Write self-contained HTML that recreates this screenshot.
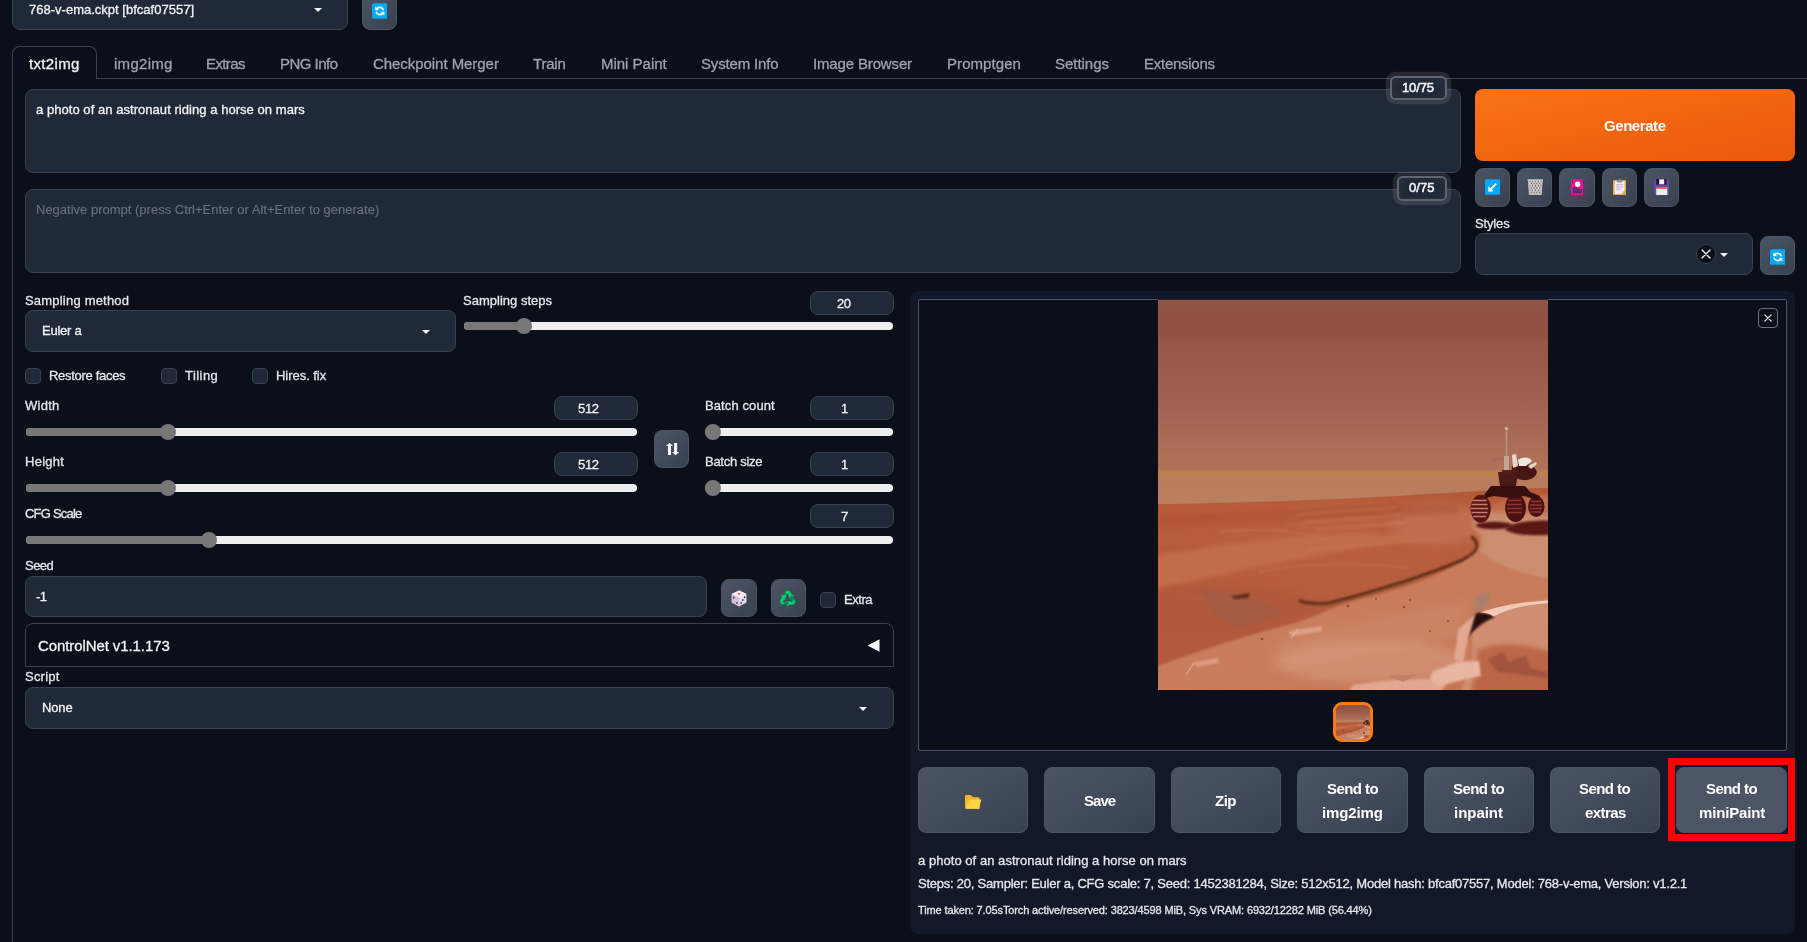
<!DOCTYPE html>
<html><head><meta charset="utf-8"><title>Stable Diffusion</title>
<style>
*{box-sizing:border-box;margin:0;padding:0}
html,body{width:1807px;height:942px;overflow:hidden;background:#0b0f19}
body{font-family:"Liberation Sans",sans-serif;color:#f3f4f6}
#root{position:relative;width:1807px;height:942px;overflow:hidden;background:#0b0f19}
#root>*{position:absolute}
.t{white-space:nowrap;line-height:1;display:block;will-change:transform;-webkit-text-stroke:0.3px currentColor}
.in{background:#1f2937;border:1px solid #374151;border-radius:8px}
.num{background:#1f2937;border:1px solid #374151;border-radius:8px}
.btn{background:linear-gradient(to bottom right,#4b5563,#374151);border:1px solid #4b5563;border-radius:8px}
.cb{background:#1f2937;border:1px solid #374151;border-radius:4px;width:16px;height:16px}
.trk{height:8px;border-radius:4px;background:#efefef;overflow:hidden}
.trk i{display:block;height:8px;background:#777}
.knob{width:16px;height:16px;border-radius:50%;background:#777}
.arr{width:0;height:0;border-left:4px solid transparent;border-right:4px solid transparent;border-top:4.5px solid #f3f4f6}
.ln{background:#374151}
</style>
<style>
.tok{background:#1f2937;border:2px solid rgba(192,192,192,0.4);border-radius:5.6px;box-shadow:0 0 0 4.2px rgba(192,192,192,0.15), inset 0 0 8px rgba(192,192,192,0.075)}
</style>

</head><body>
<div id="root">
<!-- top checkpoint dropdown -->
<div class="in" style="left:12px;top:-12px;width:336px;height:42px"></div>
<div class="arr" style="left:314px;top:8px"></div>
<div class="btn" style="left:362px;top:-12px;width:35px;height:42px"></div>
<!-- tabs -->
<div class="ln" style="left:12px;top:78px;width:1795px;height:1px"></div>
<div style="left:12px;top:46px;width:85px;height:33px;border:1px solid #374151;border-bottom:none;border-radius:8px 8px 0 0;background:#0b0f19"></div>
<div class="ln" style="left:12px;top:78px;width:1px;height:870px"></div>
<!-- prompts -->
<div class="in" style="left:25px;top:89px;width:1436px;height:84px"></div>
<div class="in" style="left:25px;top:189px;width:1436px;height:84px"></div>
<!-- token counters -->
<div class="tok" style="left:1389.5px;top:75.5px;width:57px;height:24.5px"></div>
<div class="tok" style="left:1396.5px;top:176px;width:50px;height:24.5px"></div>
<!-- generate -->
<div style="left:1475px;top:89px;width:320px;height:72px;border-radius:8px;background:linear-gradient(to bottom right,#f97316,#ea580c)"></div>
<!-- tool buttons -->
<div class="btn" style="left:1475px;top:168px;width:35px;height:39px"></div>
<div class="btn" style="left:1517px;top:168px;width:35px;height:39px"></div>
<div class="btn" style="left:1559px;top:168px;width:36px;height:39px"></div>
<div class="btn" style="left:1602px;top:168px;width:35px;height:39px"></div>
<div class="btn" style="left:1644px;top:168px;width:35px;height:39px"></div>
<!-- styles -->
<div class="in" style="left:1475px;top:233px;width:278px;height:42px"></div>
<div style="left:1696px;top:244px;width:20px;height:20px;border-radius:50%;background:#0b0f19;border:1px solid #374151"></div>
<svg style="left:1701px;top:249px" width="10" height="10" viewBox="0 0 10 10"><path d="M1 1L9 9M9 1L1 9" stroke="#f3f4f6" stroke-width="1.4" stroke-linecap="round"/></svg>
<div class="arr" style="left:1720px;top:252.5px"></div>
<div class="btn" style="left:1760px;top:236px;width:35px;height:39px"></div>
<!-- sampling -->
<div class="in" style="left:25px;top:310px;width:431px;height:42px"></div>
<div class="arr" style="left:422px;top:329.5px"></div>
<div class="num" style="left:810px;top:291px;width:84px;height:24px"></div>
<div class="trk" style="left:464px;top:322px;width:429px"><i style="width:60px"></i></div>
<div class="knob" style="left:516px;top:318px"></div>
<!-- checkboxes -->
<div class="cb" style="left:25px;top:368px"></div>
<div class="cb" style="left:161px;top:368px"></div>
<div class="cb" style="left:252px;top:368px"></div>
<!-- width/height -->
<div class="num" style="left:554px;top:396px;width:84px;height:24px"></div>
<div class="trk" style="left:25.5px;top:428px;width:611.5px"><i style="width:142px"></i></div>
<div class="knob" style="left:160px;top:424px"></div>
<div class="num" style="left:554px;top:452px;width:84px;height:24px"></div>
<div class="trk" style="left:25.5px;top:484px;width:611.5px"><i style="width:142px"></i></div>
<div class="knob" style="left:160px;top:480px"></div>
<div class="btn" style="left:654px;top:430px;width:35px;height:38px"></div>
<!-- batch -->
<div class="num" style="left:810px;top:396px;width:84px;height:24px"></div>
<div class="trk" style="left:705px;top:428px;width:188px"><i style="width:8px"></i></div>
<div class="knob" style="left:705px;top:424px"></div>
<div class="num" style="left:810px;top:452px;width:84px;height:24px"></div>
<div class="trk" style="left:705px;top:484px;width:188px"><i style="width:8px"></i></div>
<div class="knob" style="left:705px;top:480px"></div>
<!-- cfg -->
<div class="num" style="left:810px;top:504px;width:84px;height:24px"></div>
<div class="trk" style="left:25.5px;top:536px;width:867.5px"><i style="width:183px"></i></div>
<div class="knob" style="left:200.7px;top:532px"></div>
<!-- seed -->
<div class="in" style="left:25px;top:576px;width:682px;height:41px"></div>
<div class="btn" style="left:721px;top:579px;width:36px;height:38px"></div>
<div class="btn" style="left:771px;top:579px;width:35px;height:38px"></div>
<div class="cb" style="left:820px;top:592px"></div>
<!-- controlnet -->
<div style="left:25px;top:623px;width:869px;height:44px;border:1px solid #374151;border-radius:8px 8px 0 0;background:#0b0f19"></div>
<svg style="left:867px;top:638.5px" width="13" height="13" viewBox="0 0 13 13"><path d="M12.5 0.3V12.7L0.5 6.5Z" fill="#f3f4f6"/></svg>
<!-- script -->
<div class="in" style="left:25px;top:687px;width:869px;height:42px"></div>
<div class="arr" style="left:859px;top:706.5px"></div>
<!-- results panel -->
<div style="left:910px;top:291px;width:885px;height:642.5px;border-radius:8px;background:#111827"></div>
<div style="left:918px;top:299px;width:869px;height:452px;background:#0b0f19;border:1px solid #4b5563;border-radius:2px"></div>
<div id="gtop" style="left:1158px;top:299px;width:390px;height:1px;background:#1e293b"></div>
<!-- close btn -->
<div style="left:1758px;top:308px;width:20px;height:20px;border-radius:4px;border:1px solid #6b7280;background:#0b0f19"></div>
<svg style="left:1763px;top:313px" width="10" height="10" viewBox="0 0 10 10"><path d="M1.800 1.800L8.200 8.200M8.200 1.800L1.800 8.200" stroke="#e5e7eb" stroke-width="1.200" stroke-linecap="round"/></svg>
<!-- thumbnail -->
<div id="thumb" style="left:1333px;top:702px;width:40px;height:40px;border-radius:9px;border:3px solid #f97b16;overflow:hidden;background:#b3583a"><svg width="34" height="34" viewBox="0 0 390 390" style="display:block"><use href="#marsg"/></svg></div>
<!-- bottom buttons -->
<div class="btn" style="left:918px;top:767px;width:110.4px;height:66px"></div>
<div class="btn" style="left:1044.4px;top:767px;width:110.4px;height:66px"></div>
<div class="btn" style="left:1170.8px;top:767px;width:110.4px;height:66px"></div>
<div class="btn" style="left:1297.2px;top:767px;width:110.4px;height:66px"></div>
<div class="btn" style="left:1423.6px;top:767px;width:110.4px;height:66px"></div>
<div class="btn" style="left:1550px;top:767px;width:110.4px;height:66px"></div>
<div class="btn" style="left:1676.4px;top:767px;width:110.4px;height:66px;background:#4b5563"></div>
<!-- red annotation -->
<div style="left:1668px;top:758px;width:127px;height:83px;border:7px solid #ff0000"></div>

<svg id="mars" style="left:1158px;top:300px" width="390" height="390" viewBox="0 0 390 390">
<defs>
<linearGradient id="sky" x1="0" y1="0" x2="0" y2="1">
<stop offset="0" stop-color="#8f5748"/><stop offset="0.04" stop-color="#8f5243"/><stop offset="0.17" stop-color="#925141"/>
<stop offset="0.2" stop-color="#965645"/><stop offset="0.4" stop-color="#9c5d4b"/><stop offset="0.6" stop-color="#a66854"/>
<stop offset="0.8" stop-color="#af7259"/><stop offset="0.815" stop-color="#b0745a"/>
<stop offset="0.825" stop-color="#bd7f48"/><stop offset="0.84" stop-color="#bd8050"/><stop offset="0.85" stop-color="#b97c5c"/>
<stop offset="1" stop-color="#b98060"/>
</linearGradient>
<linearGradient id="gnd" x1="0" y1="0" x2="0" y2="1">
<stop offset="0" stop-color="#b45838"/><stop offset="0.15" stop-color="#b95e3d"/><stop offset="0.45" stop-color="#b85d3e"/>
<stop offset="0.7" stop-color="#b96040"/><stop offset="1" stop-color="#bc6546"/>
</linearGradient>
<linearGradient id="fg" x1="0" y1="0" x2="1" y2="1">
<stop offset="0" stop-color="#c87c5b"/><stop offset="0.5" stop-color="#c97d5c"/><stop offset="1" stop-color="#c47556"/>
</linearGradient>
<filter id="b1" x="-10%" y="-10%" width="120%" height="120%"><feGaussianBlur stdDeviation="1"/></filter>
<filter id="b2" x="-20%" y="-40%" width="140%" height="180%"><feGaussianBlur stdDeviation="2.5"/></filter>
<filter id="b4" x="-60%" y="-100%" width="220%" height="300%"><feGaussianBlur stdDeviation="5"/></filter>
<filter id="nz" x="0" y="0" width="100%" height="100%"><feTurbulence type="fractalNoise" baseFrequency="0.9" numOctaves="2" seed="3"/><feColorMatrix values="0 0 0 0 0.35  0 0 0 0 0.12  0 0 0 0 0.08  0 0 0 -1.4 0.62"/></filter>
<clipPath id="cl"><rect width="390" height="390"/></clipPath>
</defs>
<g clip-path="url(#cl)" id="marsg">
<rect width="390" height="208" fill="url(#sky)"/>
<!-- ground base -->
<path d="M0 204 C80 203 170 200 240 196 C300 192 350 189 390 188 V390 H0Z" fill="url(#gnd)"/>
<!-- light band on dune -->
<path d="M-15 258 C60 244 130 236 200 232 L270 238 C180 250 80 270 -15 293Z" fill="#c6724f" opacity=".75" filter="url(#b2)"/>
<ellipse cx="278" cy="224" rx="46" ry="22" fill="#c97c60" opacity=".55" filter="url(#b4)"/>
<ellipse cx="185" cy="218" rx="60" ry="14" fill="#c47050" opacity=".4" filter="url(#b4)"/>
<path d="M-15 215 C100 212 200 206 300 204 L300 214 C200 218 100 224 -15 228Z" fill="#a94d30" opacity=".45" filter="url(#b2)"/>
<!-- ripples -->
<g stroke="#a9533c" stroke-width="1.2" fill="none" opacity=".5" filter="url(#b1)">
<path d="M135 212 C170 206 200 208 235 204"/><path d="M140 219 C175 214 205 216 240 210"/><path d="M150 226 C185 222 210 224 245 218"/><path d="M165 233 C195 230 220 231 250 226"/>
<path d="M5 222 C30 218 50 217 80 214"/><path d="M0 250 C20 247 35 247 50 245"/>
</g>
<g stroke="#cc7c5a" stroke-width="1.6" fill="none" opacity=".55" filter="url(#b1)"><path d="M138 215.500 C172 210 203 212 238 207"/><path d="M145 222.500 C180 218 208 220 242 214"/><path d="M157 229.500 C190 226 215 227 248 222"/><path d="M60 232 C100 228 130 228 170 240"/><path d="M150 250 C190 244 240 246 290 236"/><path d="M100 272 C150 262 200 262 250 268"/><path d="M20 300 C50 296 70 300 100 318"/></g>
<!-- right plateau (lighter, where rover stands) -->
<path d="M322 236 C300 215 330 200 405 196 V300 C360 300 330 305 300 312 L250 300 C290 280 325 262 322 236Z" fill="#cb8e70" filter="url(#b2)"/>
<path d="M330 205 C350 200 375 198 405 197 V215 C370 214 350 212 330 212Z" fill="#bb5f40" opacity=".7" filter="url(#b2)"/>
<!-- dark lower-left dune -->
<path d="M-15 290 C50 280 110 282 150 296 L200 300 C170 312 120 330 80 345 C50 356 20 366 -15 378Z" fill="#b2583b" opacity=".8" filter="url(#b2)"/>
<path d="M40 289 L91 295 L129 313 L81 329 L56 313Z" fill="#9c5c4a" opacity=".6" filter="url(#b1)"/>
<path d="M74 296 L92 293 L90 298 L76 299Z" fill="#5a2818" opacity=".9" filter="url(#b1)"/>
<!-- foreground light -->
<path d="M-10 370 C40 350 90 335 141 322 C160 314 180 306 200 300 C240 290 290 275 320 250 C335 262 360 275 400 280 V400 H-10Z" fill="url(#fg)" filter="url(#b1)"/>
<path d="M120 340 C180 325 250 310 310 300 L300 340 C240 350 180 360 110 372Z" fill="#d08a6a" opacity=".6" filter="url(#b4)"/>
<ellipse cx="215" cy="362" rx="95" ry="22" fill="#dc9c84" opacity=".55" filter="url(#b4)"/>
<!-- track curve -->
<path d="M142 301 C150 304 160 304 171 303 C215 292 270 275 304 260 C318 253 324 246 314 237" fill="none" stroke="#4a2014" stroke-width="2.600" stroke-linecap="round" opacity=".9" filter="url(#b1)"/>
<path d="M142 302 C150 305 160 306 171 305 C200 298 230 289 255 281" fill="none" stroke="#6b5a2a" stroke-width="1.5" opacity=".5"/>
<!-- right rock mass -->
<path d="M312 330 C330 312 360 302 400 298 V400 H298 C312 372 318 352 312 330Z" fill="#d08e72" filter="url(#b1)"/>
<path d="M320 350 C345 340 370 345 405 355 V405 H312Z" fill="#b86040" opacity=".85" filter="url(#b2)"/>
<path d="M330 360 L345 352 L350 362 L368 356 L372 368 L390 372 V378 L360 374 L340 372Z" fill="#8a4434" opacity=".55" filter="url(#b1)"/>
<!-- crack shadow -->
<path d="M318 313 C326 312 332 314 337 317 C325 322 314 330 309 340 C306 332 310 320 318 313Z" fill="#250c0a" filter="url(#b1)"/>
<!-- bright ridge -->
<path d="M322 312.500 C340 306.500 360 301.500 400 300 V302.600 C365 304 348 309.500 336 316.500 C332 314 327 312.500 322 312.500Z" fill="#f4cbb9"/>
<path d="M316 296 L332 293 L330 306 L318 312Z" fill="#a88070" opacity=".9" filter="url(#b1)"/>
<!-- slab edge -->
<path d="M300 330 L312 318 L318 312 L310 340 L305 362 L296 360 L299 340Z" fill="#e3a892" filter="url(#b1)"/>
<path d="M274 372 L300 362 L321 361 L323 376 L305 380 L280 386 L272 380Z" fill="#e8b8a2" filter="url(#b1)"/>
<path d="M195 385 C230 380 260 378 290 380 L280 400 H185Z" fill="#e9b39e" opacity=".8" filter="url(#b1)"/>
<path d="M230 376 L260 374 L245 382Z" fill="#c07a64" opacity=".7"/>
<!-- small debris -->
<g fill="#6b3426" opacity=".7"><circle cx="246" cy="307" r="1.2"/><circle cx="252" cy="300" r="1"/><circle cx="190" cy="306" r="1.3"/><circle cx="218" cy="299" r="1"/><circle cx="104" cy="339" r="1.2"/><circle cx="272" cy="331" r="1"/><circle cx="290" cy="321" r="1"/></g>
<path d="M130 331 L163 326 L164 331 L134 336Z" fill="#e3a996" opacity=".8" filter="url(#b1)"/>
<path d="M36 362 L60 358 L61 363 L38 367Z" fill="#e3a996" opacity=".7" filter="url(#b1)"/>
<path d="M28 375 L36 363" stroke="#e8b8a6" stroke-width="1.2" opacity=".8"/><path d="M133 338 L140 329" stroke="#e8b8a6" stroke-width="1.2" opacity=".8"/>
<!-- noise texture on ground -->
<path d="M0 204 C80 203 170 200 240 196 C300 192 350 189 390 188 V390 H0Z" fill="#000" filter="url(#nz)" opacity=".35"/>
<!-- rover shadows -->
<ellipse cx="336" cy="225.500" rx="18" ry="3.800" fill="#5c1614" filter="url(#b1)"/>
<path d="M347 229 C355 221 375 220 400 220.500 V234.500 C375 236 355 236 347 229Z" fill="#5c1614" filter="url(#b1)"/>
<!-- rover -->
<g>
<ellipse cx="378.300" cy="206.500" rx="8.200" ry="10.600" fill="#4c1212"/>
<ellipse cx="322.7" cy="208.8" rx="10.1" ry="14.1" fill="#581616"/>
<ellipse cx="357.6" cy="208" rx="10.4" ry="14" fill="#4a1111"/>
<g stroke="#d8857a" stroke-width="1.400" opacity=".9"><path d="M314.5 200.500h14M313.500 204.500h16M313 208.500h17M313.500 212.500h16M315 216.500h13"/></g>
<g stroke="#9a3c36" stroke-width="1.300" opacity=".85"><path d="M350 200.500h13M349 204.500h15M349 208.500h15M350 212.500h14"/><path d="M373 201.500h10M372 205h12M372 208.500h12M373 212h10"/></g>
<path d="M333 186 H367 L372 192 L382 196 L380 200 L366 196 L352 198 L336 196 L328 198 L326 195Z" fill="#35100e"/>
<path d="M340 172 H360 L358 186 H342Z" fill="#4a1a16"/>
<path d="M354 166 C362 160 376 164 379 172 C378 179 368 182 360 179 C355 176 353 171 354 166Z" fill="#451614"/>
<path d="M354 155 L358 154 L360 166 L355 168Z" fill="#e8d8d0"/>
<path d="M360 160 C365 156 372 157 374 161 L368 166 L361 166Z" fill="#efe6e0"/>
<path d="M370 166 L378 162 L379 164 L373 169Z" fill="#e8d6cc"/>
<rect x="347.600" y="129" width="1.600" height="42" fill="#b89484"/>
<circle cx="348.400" cy="128.600" r="1.500" fill="#d8beb0"/>
<rect x="346" y="156" width="5" height="14" fill="#c4a898" opacity=".9"/>
<path d="M334 158.500 L346 157 L346 159.500 L335 161.500Z" fill="#a46a58"/>
<rect x="344" y="170" width="14" height="2.500" fill="#5a2018"/>
</g>
</g>
</svg>

<!-- refresh icons -->
<svg style="left:371.8px;top:3.3px" width="15.600" height="16" viewBox="0 0 16 16"><use href="#refr"/></svg>
<svg style="left:1769.5px;top:248.5px" width="15.600" height="16" viewBox="0 0 16 16"><use href="#refr"/></svg>
<svg width="0" height="0" style="left:0;top:0"><defs>
<g id="refr"><rect width="16" height="16" rx="1.600" fill="#03a9f4"/>
<path d="M3.300 7.200V3.400L4.700 4.700C6.700 2.900 10 3.100 11.700 5.400C12.100 6 12.400 6.600 12.500 7.200H10.900C10.300 5.200 7.600 4.300 5.900 5.900L7.200 7.200Z" fill="#fff"/>
<path d="M12.700 8.800V12.600L11.300 11.300C9.300 13.100 6 12.900 4.300 10.600C3.900 10 3.600 9.400 3.500 8.800H5.100C5.700 10.800 8.400 11.700 10.100 10.100L8.800 8.800Z" fill="#fff"/></g>
</defs></svg>
<!-- arrow-down-left -->
<svg style="left:1484.700px;top:179px" width="15.600" height="16.100" viewBox="0 0 16 16"><rect width="16" height="16" rx="1.600" fill="#03a9f4"/><path d="M10.700 3.900L12.100 5.300L6.900 10.500L8.700 12.600H3.400V7.300L5.500 9.100Z" fill="#fff"/></svg>
<!-- wastebasket -->
<svg style="left:1526.500px;top:179px" width="16.500" height="16.200" viewBox="0 0 16.500 16.200">
<defs><clipPath id="wbc"><path d="M1.300 1.800H15.300L14.200 15.800H2.400Z"/></clipPath></defs>
<path d="M1.300 1.800H15.300L14.200 15.800H2.400Z" fill="#5f5e63"/>
<g stroke="#cfcdc9" stroke-width="1.250" fill="none" clip-path="url(#wbc)"><path d="M-7.0 2L1.4 15.500M-4.2 2L4.2 15.500M-1.4 2L7.0 15.500M1.4 2L9.8 15.500M4.2 2L12.6 15.500M7.0 2L15.4 15.500M9.8 2L18.2 15.500M12.6 2L21.0 15.500M15.4 2L23.8 15.500"/><path d="M1.6 2L-6.8 15.500M4.4 2L-4.0 15.500M7.2 2L-1.2 15.500M10.0 2L1.6 15.500M12.8 2L4.4 15.500M15.6 2L7.2 15.500M18.4 2L10.0 15.500M21.2 2L12.8 15.500M24.0 2L15.6 15.500"/></g>
<path d="M0.500 0.300H16.100V2H0.500Z" fill="#c9c7c3"/>
<path d="M1.500 2L2.500 15.800M15.100 2L14.100 15.800" stroke="#c3c1bd" stroke-width="1.100"/>
<path d="M2.300 14.700H14.300V16H2.300Z" fill="#bdbbb7"/>
</svg>
<!-- flower card -->
<svg style="left:1570.600px;top:179.300px" width="12.800" height="16" viewBox="0 0 12.800 16">
<rect x="0" y="0" width="12.800" height="16" rx="1.500" fill="#ff0a96"/>
<path d="M1.700 8.600C3.500 7.600 5.500 8 7 9.300C8.300 10.400 9.800 10.400 11.100 9.800V14.400H1.700Z" fill="#58306c"/>
<path d="M1.700 1.500V4.500M11.100 1.500V4.500" stroke="#7a1060" stroke-width=".6"/>
<circle cx="6.600" cy="5.200" r="2.700" fill="#fff"/>
</svg>
<!-- clipboard -->
<svg style="left:1612.700px;top:178.800px" width="13.200" height="16.500" viewBox="0 0 13.200 16.500">
<rect x="0" y="1" width="13.200" height="15.400" rx="1.200" fill="#f2a140"/>
<path d="M1.600 2.200H11.600V11.800L8.800 15H1.600Z" fill="#f3ecfa"/>
<path d="M8.800 15V11.800H11.600Z" fill="#d8cdea"/>
<rect x="4" y="0.800" width="5.200" height="2.600" rx=".6" fill="#8d8d92"/><rect x="6" y="0" width="1.200" height="1.500" fill="#a0a0a6"/>
<path d="M3 5.800H10.200M3 8H10.200M3 10.300H7.500" stroke="#b9b3c2" stroke-width="1.100"/>
</svg>
<!-- floppy -->
<svg style="left:1653.500px;top:179.300px" width="15.600" height="16" viewBox="0 0 15.600 16">
<path d="M1.500 0H13L15.600 2.400V14.500Q15.600 16 14.100 16H1.500Q0 16 0 14.500V1.500Q0 0 1.500 0Z" fill="#5e50a0"/>
<rect x="2.200" y="0" width="10.400" height="5.700" fill="#2b1040"/>
<rect x="5.200" y="0.300" width="5" height="5" fill="#efefef"/>
<rect x="2.300" y="8.300" width="11" height="7.700" fill="#f1efee"/>
<rect x="2.300" y="8.300" width="11" height="1.400" fill="#f8312f"/>
</svg>
<!-- swap arrows -->
<svg style="left:665px;top:442px" width="15" height="14" viewBox="0 0 15 14"><path d="M4.500 0.800L8.100 4H6V13H3V4H0.900Z M10.600 13.300L14.200 10.100H12.100V0.900H9.100V10.100H7Z" fill="#fff"/></svg>
<!-- dice -->
<svg style="left:730.800px;top:589.900px" width="16.200" height="17.200" viewBox="0 0 17 18">
<path d="M8.500 0.600L16.200 4.200V13.200L8.500 17.400L0.800 13.200V4.200Z" fill="#e6dce8"/>
<path d="M8.500 0.600L16.200 4.200L8.500 8L0.800 4.200Z" fill="#f6f0f6"/>
<path d="M0.800 4.200L8.500 8V17.400L0.800 13.200Z" fill="#cfc2d4"/>
<ellipse cx="8.500" cy="3.900" rx="1.700" ry="1" fill="#f8605a"/>
<g fill="#3b2a66"><ellipse cx="3" cy="8" rx=".8" ry="1.100"/><ellipse cx="6.200" cy="13.600" rx=".8" ry="1.100"/><ellipse cx="10.600" cy="13.600" rx=".8" ry="1.100"/><ellipse cx="12.400" cy="10.600" rx=".8" ry="1.100"/><ellipse cx="14.300" cy="7.700" rx=".8" ry="1.100"/></g>
</svg>
<!-- recycle -->
<svg style="left:779.300px;top:589.300px" width="17.400" height="17.400" viewBox="-9 -10.300 18 18">
<defs><g id="rarr"><path d="M-4.200 -1.500L-1.300 -6.600" stroke="#008463" stroke-width="3.200" fill="none"/><path d="M-2.200 -6.900H1.200L3.300 -3.200" stroke="#00d26a" stroke-width="3" fill="none" stroke-linejoin="round"/><path d="M0.400 -3.600L6.600 -4.400L4.400 1.500Z" fill="#00d26a"/></g></defs>
<use href="#rarr"/><use href="#rarr" transform="rotate(120)"/><use href="#rarr" transform="rotate(240)"/>
</svg>
<!-- folder -->
<svg style="left:965px;top:794.500px" width="16.500" height="14" viewBox="0 0 16.500 14">
<path d="M1.200 0H5.700L8 2.300H14.500V13.800H1.200Q0 13.800 0 12.600V1.200Q0 0 1.200 0Z" fill="#ffb02e"/>
<path d="M4.100 4.500H16.300L14.100 13.800H0.800Z" fill="#fcd53f"/>
</svg>

<span class="t" id="t0" style="left:29.4px;top:3.4px;font-size:13px;font-weight:400;color:#f3f4f6;letter-spacing:0.009px">768-v-ema.ckpt [bfcaf07557]</span>
<span class="t" id="t1" style="left:29.4px;top:56.3px;font-size:15px;font-weight:400;color:#f3f4f6;letter-spacing:0.325px">txt2img</span>
<span class="t" id="t2" style="left:113.6px;top:56.3px;font-size:15px;font-weight:400;color:#9ca3af;letter-spacing:0.285px">img2img</span>
<span class="t" id="t3" style="left:206.3px;top:56.3px;font-size:15px;font-weight:400;color:#9ca3af;letter-spacing:-0.623px">Extras</span>
<span class="t" id="t4" style="left:280.0px;top:56.3px;font-size:15px;font-weight:400;color:#9ca3af;letter-spacing:-0.529px">PNG Info</span>
<span class="t" id="t5" style="left:372.8px;top:56.3px;font-size:15px;font-weight:400;color:#9ca3af;letter-spacing:-0.052px">Checkpoint Merger</span>
<span class="t" id="t6" style="left:533.2px;top:56.3px;font-size:15px;font-weight:400;color:#9ca3af;letter-spacing:-0.206px">Train</span>
<span class="t" id="t7" style="left:601.0px;top:56.3px;font-size:15px;font-weight:400;color:#9ca3af;letter-spacing:-0.019px">Mini Paint</span>
<span class="t" id="t8" style="left:700.5px;top:56.3px;font-size:15px;font-weight:400;color:#9ca3af;letter-spacing:-0.170px">System Info</span>
<span class="t" id="t9" style="left:813.3px;top:56.3px;font-size:15px;font-weight:400;color:#9ca3af;letter-spacing:-0.148px">Image Browser</span>
<span class="t" id="t10" style="left:946.7px;top:56.3px;font-size:15px;font-weight:400;color:#9ca3af;letter-spacing:0.066px">Promptgen</span>
<span class="t" id="t11" style="left:1055.0px;top:56.3px;font-size:15px;font-weight:400;color:#9ca3af;letter-spacing:-0.029px">Settings</span>
<span class="t" id="t12" style="left:1143.6px;top:56.3px;font-size:15px;font-weight:400;color:#9ca3af;letter-spacing:-0.264px">Extensions</span>
<span class="t" id="t13" style="left:36.0px;top:103.2px;font-size:13px;font-weight:400;color:#f3f4f6;letter-spacing:0.047px">a photo of an astronaut riding a horse on mars</span>
<span class="t" id="t14" style="left:36.0px;top:203.2px;font-size:13px;font-weight:400;color:#6b7280;letter-spacing:0.001px;-webkit-text-stroke:0.1px">Negative prompt (press Ctrl+Enter or Alt+Enter to generate)</span>
<span class="t" id="t15" style="left:1402.0px;top:81.3px;font-size:13px;font-weight:400;color:#f3f4f6;letter-spacing:-0.134px;-webkit-text-stroke:0.55px">10/75</span>
<span class="t" id="t16" style="left:1408.5px;top:181.3px;font-size:13px;font-weight:400;color:#f3f4f6;letter-spacing:0.062px;-webkit-text-stroke:0.55px">0/75</span>
<span class="t" id="t17" style="left:1604.0px;top:118.3px;font-size:15px;font-weight:700;color:#ffffff;letter-spacing:-0.435px;-webkit-text-stroke:0">Generate</span>
<span class="t" id="t18" style="left:1475.0px;top:217.4px;font-size:13px;font-weight:400;color:#e5e7eb;letter-spacing:-0.141px">Styles</span>
<span class="t" id="t19" style="left:25.0px;top:293.6px;font-size:13px;font-weight:400;color:#e5e7eb;letter-spacing:0.202px">Sampling method</span>
<span class="t" id="t20" style="left:42.3px;top:324.3px;font-size:13px;font-weight:400;color:#f3f4f6;letter-spacing:-0.234px">Euler a</span>
<span class="t" id="t21" style="left:463.0px;top:293.6px;font-size:13px;font-weight:400;color:#e5e7eb;letter-spacing:0.009px">Sampling steps</span>
<span class="t" id="t22" style="left:837.3px;top:297.0px;font-size:13px;font-weight:400;color:#f3f4f6;letter-spacing:-0.564px">20</span>
<span class="t" id="t23" style="left:49.1px;top:369.0px;font-size:13px;font-weight:400;color:#e5e7eb;letter-spacing:-0.301px">Restore faces</span>
<span class="t" id="t24" style="left:185.0px;top:369.0px;font-size:13px;font-weight:400;color:#e5e7eb;letter-spacing:0.441px">Tiling</span>
<span class="t" id="t25" style="left:276.4px;top:369.0px;font-size:13px;font-weight:400;color:#e5e7eb;letter-spacing:-0.041px">Hires. fix</span>
<span class="t" id="t26" style="left:25.0px;top:399.0px;font-size:13px;font-weight:400;color:#e5e7eb;letter-spacing:0.264px">Width</span>
<span class="t" id="t27" style="left:577.7px;top:402.2px;font-size:13px;font-weight:400;color:#f3f4f6;letter-spacing:-0.345px">512</span>
<span class="t" id="t28" style="left:705.3px;top:399.0px;font-size:13px;font-weight:400;color:#e5e7eb;letter-spacing:0.103px">Batch count</span>
<span class="t" id="t29" style="left:840.8px;top:402.2px;font-size:13px;font-weight:400;color:#f3f4f6;letter-spacing:0.000px">1</span>
<span class="t" id="t30" style="left:25.0px;top:455.4px;font-size:13px;font-weight:400;color:#e5e7eb;letter-spacing:0.281px">Height</span>
<span class="t" id="t31" style="left:577.7px;top:458.2px;font-size:13px;font-weight:400;color:#f3f4f6;letter-spacing:-0.345px">512</span>
<span class="t" id="t32" style="left:705.3px;top:455.4px;font-size:13px;font-weight:400;color:#e5e7eb;letter-spacing:-0.275px">Batch size</span>
<span class="t" id="t33" style="left:840.8px;top:458.2px;font-size:13px;font-weight:400;color:#f3f4f6;letter-spacing:0.000px">1</span>
<span class="t" id="t34" style="left:25.0px;top:507.0px;font-size:13px;font-weight:400;color:#e5e7eb;letter-spacing:-0.785px">CFG Scale</span>
<span class="t" id="t35" style="left:840.8px;top:510.0px;font-size:13px;font-weight:400;color:#f3f4f6;letter-spacing:0.000px">7</span>
<span class="t" id="t36" style="left:25.0px;top:559.0px;font-size:13px;font-weight:400;color:#e5e7eb;letter-spacing:-0.524px">Seed</span>
<span class="t" id="t37" style="left:35.9px;top:590.0px;font-size:13px;font-weight:400;color:#f3f4f6;letter-spacing:-0.562px">-1</span>
<span class="t" id="t38" style="left:844.0px;top:593.3px;font-size:13px;font-weight:400;color:#e5e7eb;letter-spacing:-0.464px">Extra</span>
<span class="t" id="t39" style="left:38.0px;top:638.3px;font-size:15px;font-weight:400;color:#f3f4f6;letter-spacing:-0.090px">ControlNet v1.1.173</span>
<span class="t" id="t40" style="left:25.0px;top:670.0px;font-size:13px;font-weight:400;color:#e5e7eb;letter-spacing:0.213px">Script</span>
<span class="t" id="t41" style="left:42.3px;top:701.0px;font-size:13px;font-weight:400;color:#f3f4f6;letter-spacing:-0.126px">None</span>
<span class="t" id="t42" style="left:1083.6px;top:792.7px;font-size:15px;font-weight:700;color:#ffffff;letter-spacing:-0.982px;-webkit-text-stroke:0">Save</span>
<span class="t" id="t43" style="left:1215.2px;top:792.7px;font-size:15px;font-weight:700;color:#ffffff;letter-spacing:-0.500px;-webkit-text-stroke:0">Zip</span>
<span class="t" id="t44" style="left:1326.6px;top:781.3px;font-size:15px;font-weight:700;color:#ffffff;letter-spacing:-0.567px;-webkit-text-stroke:0">Send to</span>
<span class="t" id="t45" style="left:1321.9px;top:805.3px;font-size:15px;font-weight:700;color:#ffffff;letter-spacing:-0.115px;-webkit-text-stroke:0">img2img</span>
<span class="t" id="t46" style="left:1453.0px;top:781.3px;font-size:15px;font-weight:700;color:#ffffff;letter-spacing:-0.567px;-webkit-text-stroke:0">Send to</span>
<span class="t" id="t47" style="left:1454.3px;top:805.3px;font-size:15px;font-weight:700;color:#ffffff;letter-spacing:-0.029px;-webkit-text-stroke:0">inpaint</span>
<span class="t" id="t48" style="left:1579.4px;top:781.3px;font-size:15px;font-weight:700;color:#ffffff;letter-spacing:-0.567px;-webkit-text-stroke:0">Send to</span>
<span class="t" id="t49" style="left:1584.5px;top:805.3px;font-size:15px;font-weight:700;color:#ffffff;letter-spacing:-0.561px;-webkit-text-stroke:0">extras</span>
<span class="t" id="t50" style="left:1705.8px;top:781.3px;font-size:15px;font-weight:700;color:#ffffff;letter-spacing:-0.567px;-webkit-text-stroke:0">Send to</span>
<span class="t" id="t51" style="left:1698.5px;top:805.3px;font-size:15px;font-weight:700;color:#ffffff;letter-spacing:-0.151px;-webkit-text-stroke:0">miniPaint</span>
<span class="t" id="t52" style="left:918.1px;top:853.8px;font-size:13px;font-weight:400;color:#e5e7eb;letter-spacing:0.043px">a photo of an astronaut riding a horse on mars</span>
<span class="t" id="t53" style="left:918.1px;top:877.0px;font-size:13px;font-weight:400;color:#e5e7eb;letter-spacing:-0.232px">Steps: 20, Sampler: Euler a, CFG scale: 7, Seed: 1452381284, Size: 512x512, Model hash: bfcaf07557, Model: 768-v-ema, Version: v1.2.1</span>
<span class="t" id="t54" style="left:918.1px;top:904.9px;font-size:11px;font-weight:400;color:#e5e7eb;letter-spacing:-0.126px">Time taken: 7.05sTorch active/reserved: 3823/4598 MiB, Sys VRAM: 6932/12282 MiB (56.44%)</span>
</div>
</body></html>
